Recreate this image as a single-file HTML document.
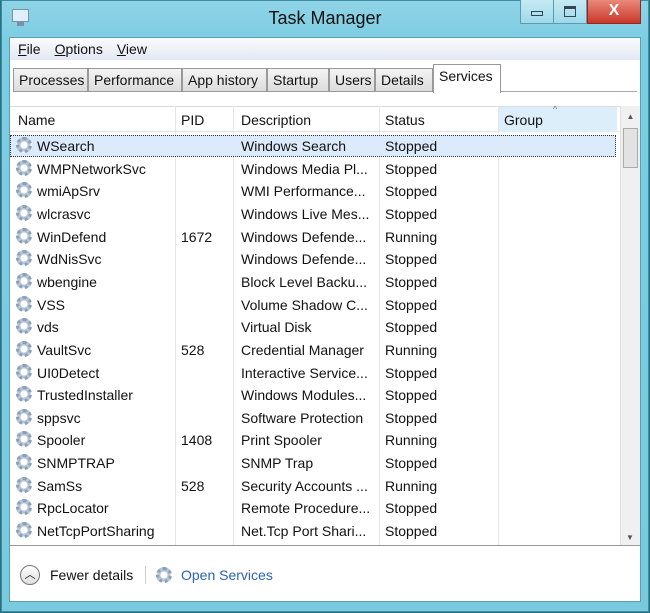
<!DOCTYPE html><html><head><style>
*{margin:0;padding:0;box-sizing:border-box}
body{width:650px;height:613px;overflow:hidden;background:#2a6f80;font-family:"Liberation Sans",sans-serif;font-size:14px;color:#111;position:relative}
.frame{position:absolute;left:1px;top:0;width:648px;height:612px;background:linear-gradient(#8fd3e6,#7ccde3 40px,#79c9df);border:1px solid #3d8ea3}
.client{position:absolute;left:9px;top:37px;width:632px;height:565px;background:#fff;border:1px solid #5c9fb0}
.title{position:absolute;left:0;width:650px;top:8px;text-align:center;font-size:18px;color:#111}
.btn{position:absolute;top:0;height:24px;border:1px solid #5a9bb0;border-top:none;background:linear-gradient(#c6eaf4,#9ed9ea)}
.close{background:linear-gradient(#e9897a,#c9382a);border-color:#8f2a20;color:#fff;font-weight:bold;text-align:center;font-size:16px;line-height:22px}
.menu{position:absolute;left:0;top:0;width:630px;height:22px;background:linear-gradient(#fafbfd,#e4e8f3);font-size:14px;padding:3px 8px}
.menu span{margin-right:14px}
.tabs{position:absolute;left:3px;top:28px;height:26px;width:624px;border-bottom:1px solid #aaa}
.tab{position:absolute;top:2px;height:24px;border:1px solid #999;background:linear-gradient(#f4f4f4,#dcdcdc);font-size:14px;padding:3px 5px 0}
.tab.sel{top:-2px;height:29px;background:#fff;border-bottom:none}
.hdr{position:absolute;left:0;top:68px;width:610px;height:26px;border-top:1px solid #ddd;border-bottom:1px solid #e4e4e4}
.hdr div{position:absolute;top:5px}
.sep{position:absolute;top:68px;width:1px;height:440px;background:#e6e6e6}
.row{position:absolute;left:0;height:22px;width:606px}
.row span{position:absolute;top:3px;white-space:nowrap}
.gear{position:absolute;left:6px;top:2px;width:16px;height:16px;border-radius:50%;border:3px dotted #8aa0b8;background:radial-gradient(circle,#fff 3px,#b7c6d6 4px)}
.sb{position:absolute;left:610px;top:68px;width:20px;height:440px;background:#f0f0f0;border-left:1px solid #e0e0e0}
</style></head><body>
<div class="frame"></div>
<div style="position:absolute;left:12px;top:9px;width:17px;height:13px;border:1px solid #7a8fa8;background:#dff0fb"></div>
<div style="position:absolute;left:17px;top:22px;width:7px;height:4px;background:#7a8fa8"></div>
<div class="title">Task Manager</div>
<div class="btn" style="left:520px;width:34px"><div style="margin:11px auto 0;width:12px;height:5px;border:1px solid #345"></div></div>
<div class="btn" style="left:553px;width:34px"><div style="margin:6px auto 0;width:12px;height:11px;border:1px solid #345;border-top-width:3px"></div></div>
<div class="btn close" style="left:587px;width:54px">X</div>
<div class="client">
<div class="menu"><span><u>F</u>ile</span><span><u>O</u>ptions</span><span><u>V</u>iew</span></div>
<div class="tabs">
<div class="tab" style="left:0;width:75px">Processes</div>
<div class="tab" style="left:75px;width:94px">Performance</div>
<div class="tab" style="left:169px;width:85px">App history</div>
<div class="tab" style="left:254px;width:62px">Startup</div>
<div class="tab" style="left:316px;width:46px">Users</div>
<div class="tab" style="left:362px;width:58px">Details</div>
<div class="tab sel" style="left:420px;width:68px">Services</div>
</div>
<div class="hdr"><div style="left:8px">Name</div><div style="left:171px">PID</div><div style="left:231px">Description</div><div style="left:375px">Status</div>
<div style="left:488px;top:0;width:119px;height:25px;background:#dbeef9;padding:5px 6px">Group<span style="position:absolute;left:55px;top:-3px;font-size:9px;color:#678">^</span></div></div>
<div class="sep" style="left:165px"></div><div class="sep" style="left:223px"></div><div class="sep" style="left:369px"></div><div class="sep" style="left:488px"></div>
<div class="sb"><div style="position:absolute;left:2px;top:22px;width:15px;height:40px;background:#e2e2e2;border:1px solid #aaa"></div><div style="text-align:center;font-size:8px;color:#555;margin-top:6px">▲</div><div style="position:absolute;bottom:4px;width:18px;text-align:center;font-size:8px;color:#555">▼</div></div>
<div style="position:absolute;left:0;top:507px;width:630px;height:1px;background:#999"></div>
<div id="rows"></div>
<div style="position:absolute;left:10px;top:527px;width:20px;height:20px;border-radius:50%;border:1px solid #777;background:linear-gradient(#fff,#ddd);text-align:center;font-size:11px;line-height:19px">︿</div>
<div style="position:absolute;left:40px;top:529px">Fewer details</div>
<div style="position:absolute;left:135px;top:528px;width:1px;height:18px;background:#ccc"></div>
<div class="gear" style="left:146px;top:529px"></div>
<div style="position:absolute;left:171px;top:529px;color:#2b63b8">Open Services</div>
</div>
<script>
var d=[["WSearch","","Windows Search","Stopped"],["WMPNetworkSvc","","Windows Media Pl...","Stopped"],["wmiApSrv","","WMI Performance...","Stopped"],["wlcrasvc","","Windows Live Mes...","Stopped"],["WinDefend","1672","Windows Defende...","Running"],["WdNisSvc","","Windows Defende...","Stopped"],["wbengine","","Block Level Backu...","Stopped"],["VSS","","Volume Shadow C...","Stopped"],["vds","","Virtual Disk","Stopped"],["VaultSvc","528","Credential Manager","Running"],["UI0Detect","","Interactive Service...","Stopped"],["TrustedInstaller","","Windows Modules...","Stopped"],["sppsvc","","Software Protection","Stopped"],["Spooler","1408","Print Spooler","Running"],["SNMPTRAP","","SNMP Trap","Stopped"],["SamSs","528","Security Accounts ...","Running"],["RpcLocator","","Remote Procedure...","Stopped"],["NetTcpPortSharing","","Net.Tcp Port Shari...","Stopped"]];
var h="";d.forEach(function(r,i){var t=97+i*22.65;h+='<div class="row" style="top:'+t+'px;'+(i==0?'background:#dcebfb;outline:1px dotted #333;outline-offset:-1px;':'')+'"><div class="gear"></div><span style="left:27px">'+r[0]+'</span><span style="left:171px">'+r[1]+'</span><span style="left:231px">'+r[2]+'</span><span style="left:375px">'+r[3]+'</span></div>'});
document.getElementById("rows").innerHTML=h;
</script>
</body></html>
